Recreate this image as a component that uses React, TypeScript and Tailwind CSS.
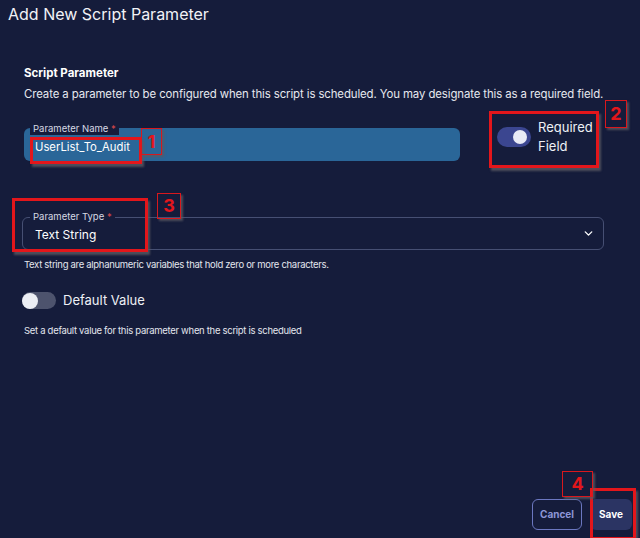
import { ChevronDown } from "lucide-react";

type Mark = { label: string; box: string; tag: string };

const marks: Mark[] = [
  {
    label: "1",
    box: "left-[30px] top-[137px] h-[27px] w-[112px]",
    tag: "left-[141px] top-[128px] h-[27px] w-[21px]",
  },
  {
    label: "2",
    box: "left-[489px] top-[111px] h-[57px] w-[110px]",
    tag: "left-[605px] top-[100px] h-[28px] w-[22px]",
  },
  {
    label: "3",
    box: "left-[12px] top-[198px] h-[54px] w-[136px]",
    tag: "left-[157px] top-[193px] h-[26px] w-[24px]",
  },
  {
    label: "4",
    box: "left-[590px] top-[488px] h-[52px] w-[46px]",
    tag: "left-[562px] top-[471px] h-[26px] w-[31px]",
  },
];

function Annotation({ mark }: { mark: Mark }) {
  return (
    <>
      <div
        className={`pointer-events-none absolute border-[3px] border-[#e3161b] shadow-[2px_3px_2px_rgba(90,90,100,0.8)] ${mark.box}`}
      />
      <div
        className={`pointer-events-none absolute flex items-center justify-center border border-[#d8181d] text-[18px] font-bold leading-none text-[#e3161b] shadow-[2px_2px_2px_rgba(90,90,100,0.8)] ${mark.tag}`}
      >
        {mark.label}
      </div>
    </>
  );
}

function Toggle({ on }: { on: boolean }) {
  return on ? (
    <div className="flex h-[20px] w-[34px] items-center justify-end rounded-full bg-[#3b4690] pr-[4px]">
      <div className="h-[14px] w-[14px] rounded-full bg-[#e9ebf6]" />
    </div>
  ) : (
    <div className="flex h-[17px] w-[34px] items-center rounded-full bg-[#4d536d]">
      <div className="h-[16px] w-[16px] rounded-full bg-[#eceef4]" />
    </div>
  );
}

function App() {
  return (
    <div className="relative flex h-[538px] w-[640px] flex-col overflow-hidden bg-[#151c3b] font-['Inter',sans-serif] text-white">
      <h1 className="px-2 pt-[3px] text-[16px] leading-[22px] text-[#f1f2f6]">
        Add New Script Parameter
      </h1>

      <div className="mt-[40px] px-6">
        <h2 className="text-[11.5px] font-bold leading-[16px]">Script Parameter</h2>
        <p className="mt-[5px] text-[11.4px] leading-[16px] tracking-[-0.1px] text-[#e6e8ef]">
          Create a parameter to be configured when this script is scheduled. You may designate this as a required field.
        </p>

        <div className="mt-[16px] flex items-start">
          <div className="relative mt-[10px] h-[33px] w-[436px] rounded-md bg-[#2a6698]">
            <span className="absolute left-[6px] top-[-5px] bg-[#151c3b] px-[3px] text-[9.5px] leading-[12px] text-[#d5d9e4]">
              Parameter Name <span className="text-[#d8474a]">*</span>
            </span>
            <div className="flex h-full items-center pl-[11px] pt-[5px] text-[11.3px] text-white">
              UserList_To_Audit
            </div>
          </div>
          <div className="ml-[37px] flex items-center gap-[7px]">
            <Toggle on />
            <div className="text-[13px] leading-[19px] text-[#eef0f5]">
              Required
              <br />
              Field
            </div>
          </div>
        </div>

        <div className="relative -ml-[2px] mt-[56px] flex h-[33px] w-[582px] items-center justify-between rounded-md border border-[#464f73] pl-[12px] pr-[8px]">
          <span className="absolute left-[7px] top-[-7px] bg-[#151c3b] px-[3px] text-[9.5px] leading-[12px] text-[#d5d9e4]">
            Parameter Type <span className="text-[#d8474a]">*</span>
          </span>
          <span className="pt-[2px] text-[12px] text-white">Text String</span>
          <ChevronDown className="h-[13px] w-[13px] text-white" strokeWidth={2.5} />
        </div>

        <p className="mt-[9px] text-[9.5px] leading-[12px] tracking-[-0.3px] text-[#e3e6ee]">
          Text string are alphanumeric variables that hold zero or more characters.
        </p>

        <div className="-ml-[2px] mt-[20px] flex items-center gap-[7px]">
          <Toggle on={false} />
          <span className="text-[13px] text-[#eef0f5]">Default Value</span>
        </div>

        <p className="mt-[14px] text-[9.5px] leading-[12px] tracking-[-0.3px] text-[#e3e6ee]">
          Set a default value for this parameter when the script is scheduled
        </p>
      </div>

      <div className="mt-auto flex justify-end gap-[8px] pb-[8px] pr-[8px]">
        <button className="h-[31px] w-[50px] rounded-md border border-[#6b77c0] text-[10px] font-bold text-[#8d96d6]">
          Cancel
        </button>
        <button className="h-[31px] w-[42px] rounded-md bg-[#2b3463] text-[10px] font-bold text-white">
          Save
        </button>
      </div>

      {marks.map((m) => (
        <Annotation key={m.label} mark={m} />
      ))}
    </div>
  );
}

export default App;
